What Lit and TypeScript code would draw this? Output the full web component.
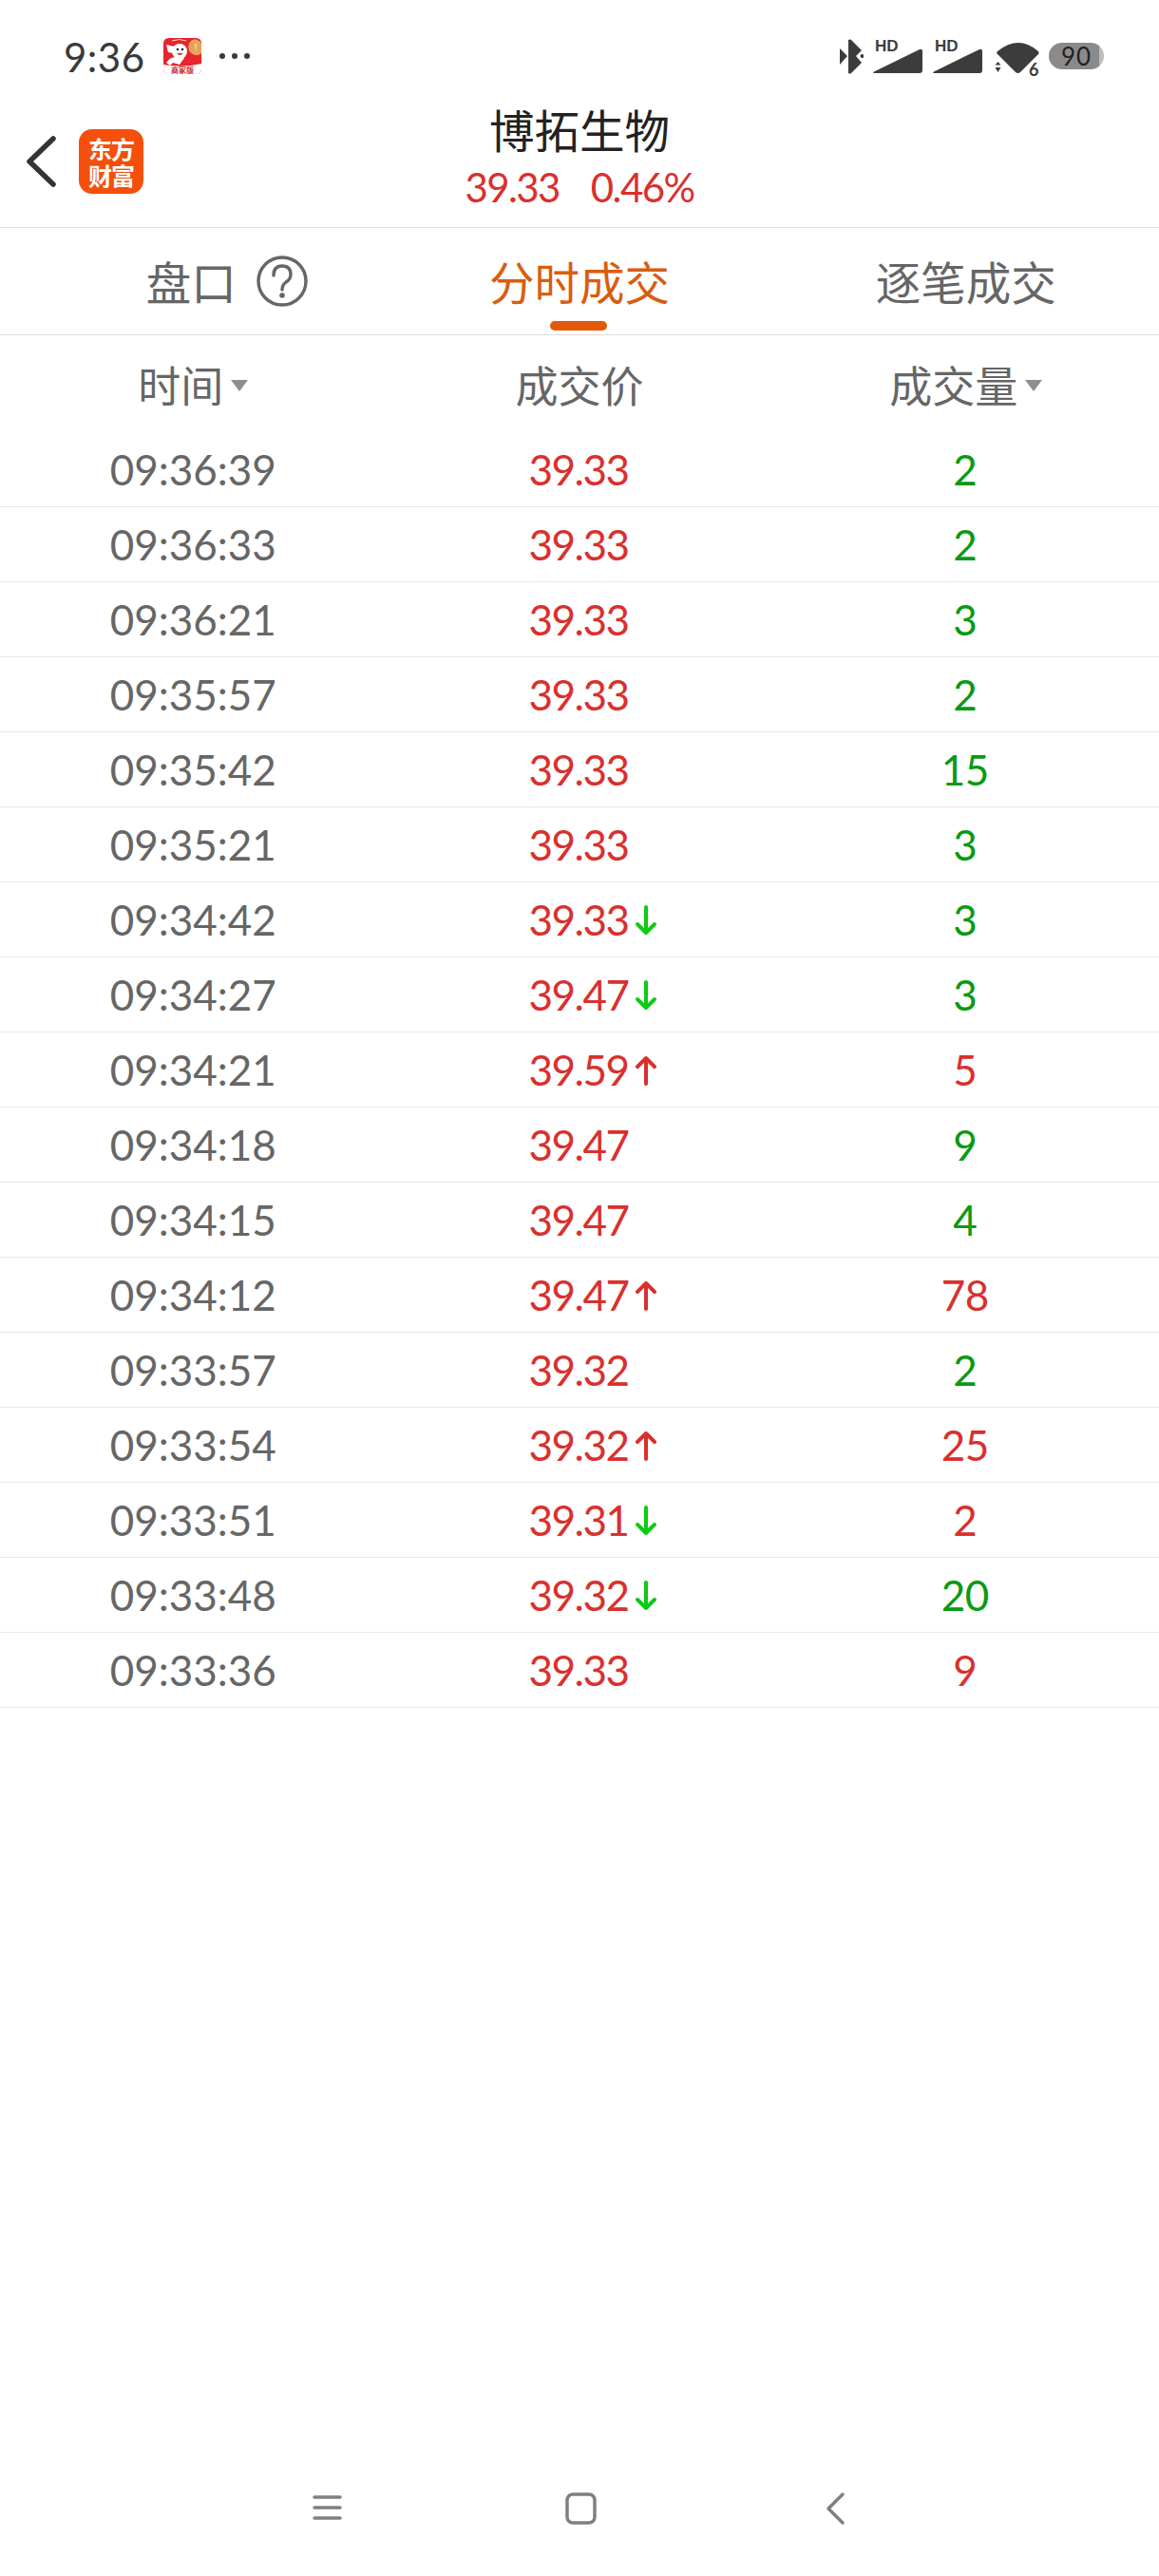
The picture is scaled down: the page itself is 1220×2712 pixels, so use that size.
import { LitElement, html, css, svg } from "lit";
import { customElement } from "lit/decorators.js";

type Row = [string, string, "up" | "down" | "", string, "g" | "r"];
const rows: Row[] = [
  ["09:36:39", "39.33", "", "2", "g"],
  ["09:36:33", "39.33", "", "2", "g"],
  ["09:36:21", "39.33", "", "3", "g"],
  ["09:35:57", "39.33", "", "2", "g"],
  ["09:35:42", "39.33", "", "15", "g"],
  ["09:35:21", "39.33", "", "3", "g"],
  ["09:34:42", "39.33", "down", "3", "g"],
  ["09:34:27", "39.47", "down", "3", "g"],
  ["09:34:21", "39.59", "up", "5", "r"],
  ["09:34:18", "39.47", "", "9", "g"],
  ["09:34:15", "39.47", "", "4", "g"],
  ["09:34:12", "39.47", "up", "78", "r"],
  ["09:33:57", "39.32", "", "2", "g"],
  ["09:33:54", "39.32", "up", "25", "r"],
  ["09:33:51", "39.31", "down", "2", "r"],
  ["09:33:48", "39.32", "down", "20", "g"],
  ["09:33:36", "39.33", "", "9", "r"],
];

const signal = html`<span class="sig"><span class="hd">HD</span><svg class="tri" viewBox="0 0 54 26"><path d="M2 24.5 L50 1 Q53 0 53 3 L53 23 Q53 26 50 26 L3 26 Q0 26 2 24.5Z" fill="#3c3c3c"/></svg></span>`;

@customElement("app-root")
export class AppRoot extends LitElement {
  static styles = css`
    :host {
      display: flex;
      flex-direction: column;
      width: 1220px;
      height: 2712px;
      background: #fff;
      font-family: "Lato", "Noto Sans CJK SC", sans-serif;
      color: #666;
      overflow: hidden;
    }
    .status {
      height: 100px;
      flex: none;
      display: flex;
      align-items: flex-start;
      box-sizing: border-box;
      padding: 36px 58px 0 67px;
    }
    .clock {
      font-size: 42px;
      line-height: 48px;
      color: #3a3a3a;
      width: 105px;
      letter-spacing: 0.5px;
    }
    .jd { width: 40px; height: 38px; margin-top: 4px; }
    .dots { width: 32px; height: 8px; margin: 19px 0 0 19px; }
    .right { margin-left: auto; display: flex; align-items: flex-start; }
    .bt { width: 25px; height: 37px; margin: 5px 9px 0 0; }
    .sig { position: relative; display: block; width: 54px; height: 36px; margin: 5px 9px 0 0; }
    .hd {
      position: absolute; left: 3px; top: 0;
      font: 700 17px/15px "Liberation Sans", sans-serif;
      color: #3c3c3c;
    }
    .tri { position: absolute; left: 0; bottom: 0; width: 54px; height: 26px; }
    .wifi { width: 50px; height: 42px; margin: 7px 7px 0 3px; }
    .batt {
      width: 58px; height: 28px; margin-top: 9px; border-radius: 14px;
      background: linear-gradient(90deg, #8a8a8a 0 53px, #bdbdbd 53px);
      color: #222;
      font-size: 26px; line-height: 28px; text-align: center;
      letter-spacing: 1px;
    }
    .head {
      height: 140px;
      flex: none;
      box-sizing: border-box;
      display: grid;
      grid-template-columns: 1fr auto 1fr;
      border-bottom: 1px solid #ddd;
    }
    .brand { display: flex; align-items: center; padding: 0 0 0 27px; }
    .back { width: 32px; height: 54px; margin-right: 24px; }
    .logo {
      width: 68px; height: 68px; border-radius: 14px; background: #f4500c;
      color: #fff; font: 700 25px/28px "Noto Sans CJK SC", sans-serif;
      box-sizing: border-box; padding: 6px 9px; text-align: center;
      letter-spacing: -1px;
    }
    .title { text-align: center; }
    .name { font-size: 47.5px; line-height: 56px; color: #222; margin-top: 10px; }
    .sub {
      font-size: 42px; line-height: 48px; color: #d9302e; margin-top: 7px;
      display: flex; gap: 33px; justify-content: center; letter-spacing: -1.6px;
    }
    .tabs {
      height: 113px; flex: none; box-sizing: border-box;
      display: grid; grid-template-columns: repeat(3, 1fr);
      border-bottom: 1px solid #ddd;
      font-size: 47.5px;
    }
    .tab { position: relative; display: flex; align-items: center; justify-content: center; padding-bottom: 1px; }
    .tab.first { padding-left: 71px; }
    .tab.on { color: #d95d0f; }
    .tab.on::after {
      content: ""; position: absolute; left: 50%; margin-left: -31px; bottom: 4px;
      width: 60px; height: 10px; border-radius: 5px; background: #e35a0a;
    }
    .help { width: 54px; height: 54px; margin-left: 21px; }
    .thead {
      height: 102px; flex: none; display: grid; grid-template-columns: repeat(3, 1fr);
      font-size: 45px; align-items: center;
    }
    .th { display: flex; align-items: center; justify-content: center; }
    .caret {
      width: 0; height: 0; margin: 4px 0 0 8px;
      border-left: 9px solid transparent; border-right: 9px solid transparent;
      border-top: 12px solid #8e8e93;
    }
    .row {
      height: 79px; box-sizing: border-box; display: grid; grid-template-columns: repeat(3, 1fr);
      border-bottom: 1px solid #e8e8e8; align-items: center; text-align: center;
      font-size: 44px; line-height: 50px;
    }
    .t { color: #666; }
    .p { color: #d9302e; position: relative; letter-spacing: -1.5px; justify-self: center; margin-left: -2px; }
    .arrow { position: absolute; left: 100%; top: 10px; margin-left: 7px; width: 24px; height: 32px; }
    .v { letter-spacing: -0.5px; margin-left: -2px; }
    .g { color: #0a9a12; }
    .r { color: #d9302e; }
    .nav { margin-top: auto; height: 90px; flex: none; display: flex; justify-content: center; align-items: flex-start; }
    .navbar { width: 620px; height: 40px; display: block; }
  `;

  render() {
    return html`
      <div class="status">
        <span class="clock">9:36</span>
        <svg class="jd" viewBox="0 0 40 38">
          <path d="M6 0H34Q40 0 40 6V32Q40 38 34 38H6Q0 38 0 32V6Q0 0 6 0Z" fill="#e8242c"/>
          <path d="M0 28Q20 32 40 27V32Q40 38 34 38H6Q0 38 0 32Z" fill="#fff"/>
          <path d="M29 3 A7.500 8 0 0 1 40 6 V16 A7.500 8 0 0 1 29 3Z" fill="#e7a35a"/>
          <path d="M33 6 L35 6 L34 15Z" fill="#f6d9a8"/>
          <circle cx="17" cy="14" r="8" fill="#fff"/>
          <path d="M11 9 L3 7 L5 15 L10 16Z" fill="#fff"/>
          <path d="M13 20 Q7 20 3 26 L7 29 L10 26 L17 28 L22 21 Z" fill="#fff"/>
          <circle cx="20" cy="12" r="1.300" fill="#222"/>
          <circle cx="15" cy="12" r="1.300" fill="#222"/>
          <path d="M14 16 Q17 20 21 16Z" fill="#e8242c"/>
          <path d="M9 3 Q17 0 24 3" stroke="#fff" stroke-width="0.800" fill="none"/>
          <text x="20" y="37" font-size="8" font-weight="700" text-anchor="middle" fill="#c9282e" font-family="Noto Sans CJK SC, sans-serif">商家版</text>
        </svg>
        <svg class="dots" viewBox="0 0 32 8" fill="#3a3a3a"><circle cx="3" cy="4" r="3"/><circle cx="16" cy="4" r="3"/><circle cx="29" cy="4" r="3"/></svg>
        <div class="right">
          <svg class="bt" viewBox="0 0 25 37" fill="#3c3c3c">
            <path d="M0 10 L8 18 L0 27Z"/>
            <path d="M9 1 Q11 0 12 1 L23 12 L17 18 L23 25 L12 36 Q10 37 9 36Z"/>
            <circle cx="23.500" cy="18" r="2"/>
          </svg>
          ${signal}${signal}
          <svg class="wifi" viewBox="0 0 50 42" fill="#3c3c3c">
            <path d="M3 11 Q25 -7 46 11 Q47 13 46 14 L27 33 Q24.500 35 22 33 L4 15 Q1 13 3 11Z"/>
            <path d="M3.500 22 L6.500 25.500 H0.500Z M3.500 33 L0.500 28 H6.500Z"/>
            <text x="36" y="37" font-size="18" font-weight="700" font-family="Lato, sans-serif">6</text>
          </svg>
          <div class="batt">90</div>
        </div>
      </div>
      <div class="head">
        <div class="brand">
          <svg class="back" viewBox="0 0 32 54" fill="none" stroke="#333" stroke-width="5.500" stroke-linecap="round" stroke-linejoin="round"><path d="M29 3 L4 27 L29 51"/></svg>
          <div class="logo">东方财富</div>
        </div>
        <div class="title">
          <div class="name">博拓生物</div>
          <div class="sub"><span>39.33</span><span>0.46%</span></div>
        </div>
        <div></div>
      </div>
      <div class="tabs">
        <div class="tab first">盘口
          <svg class="help" viewBox="0 0 54 54" fill="none" stroke="#666" stroke-width="3.400">
            <circle cx="27" cy="27" r="25"/>
            <path d="M18 21 Q18 11 27 11 Q36 11 36 20 Q36 25 31 28 Q27 31 27 36" stroke-linecap="round"/>
            <circle cx="27" cy="42" r="2.800" fill="#666" stroke="none"/>
          </svg>
        </div>
        <div class="tab on">分时成交</div>
        <div class="tab">逐笔成交</div>
      </div>
      <div class="thead">
        <div class="th">时间<span class="caret"></span></div>
        <div class="th">成交价</div>
        <div class="th">成交量<span class="caret"></span></div>
      </div>
      <div class="list">
        ${rows.map(
          ([t, p, a, v, c]) => html`<div class="row">
            <span class="t">${t}</span>
            <span class="p">${p}${a === "" ? "" : svg`<svg class="arrow" viewBox="0 0 24 32" fill="none" stroke=${a === "up" ? "#d9302e" : "#0ccb12"} stroke-width="4" stroke-linecap="round" stroke-linejoin="round">
              ${a === "up" ? svg`<path d="M12 30V3M3 12L12 3L21 12"/>` : svg`<path d="M12 2V29M3 20L12 29L21 20"/>`}
            </svg>`}</span>
            <span class="v ${c}">${v}</span>
          </div>`
        )}
      </div>
      <div class="nav">
        <svg class="navbar" viewBox="0 0 620 40" fill="none" stroke="#808080" stroke-width="3.500" stroke-linecap="round" stroke-linejoin="round">
          <path d="M31 7H58M31 18H58M31 29H58"/>
          <rect x="297" y="4" width="29" height="30" rx="6"/>
          <path d="M587 4L572 19L587 34"/>
        </svg>
      </div>
    `;
  }
}
